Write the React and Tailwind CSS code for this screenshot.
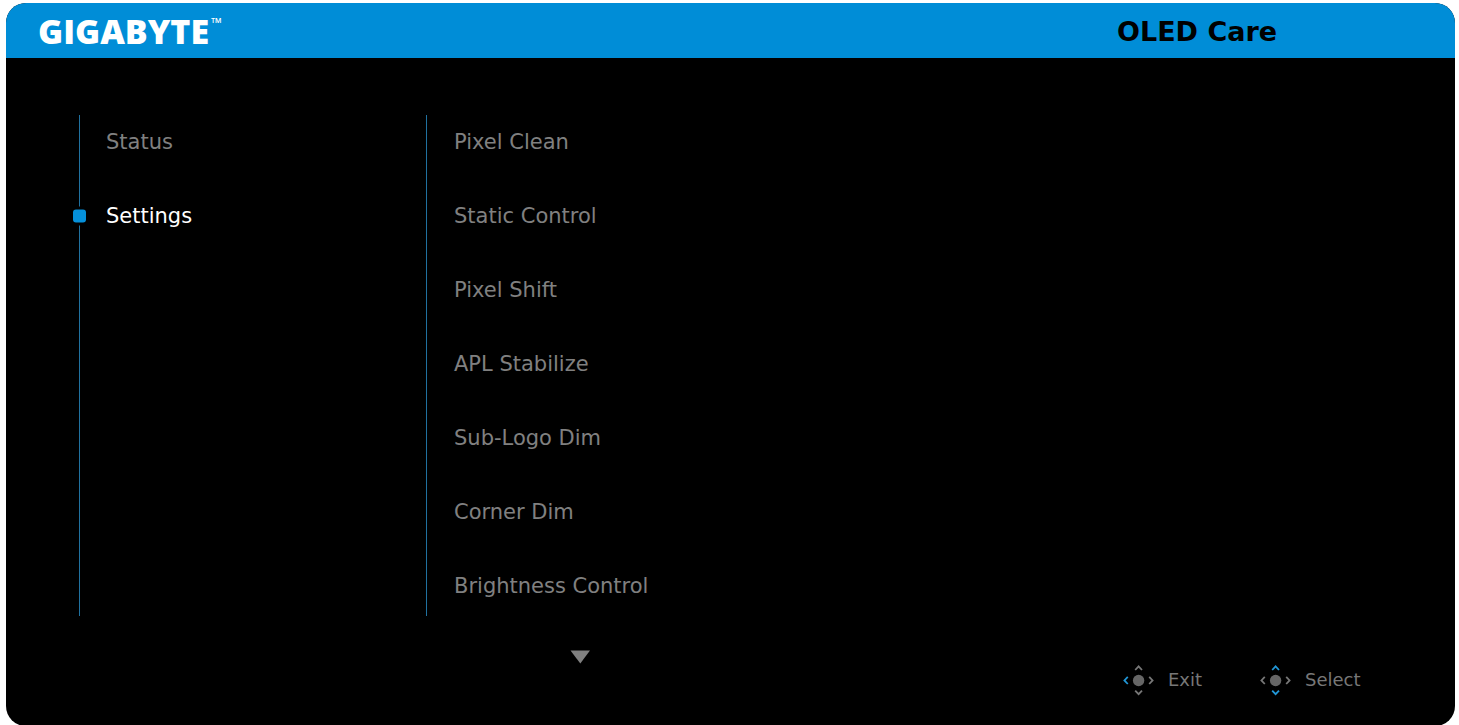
import React, { useState } from 'react';

const MENUS = ['Status', 'Settings'];

const SETTINGS = [
  'Pixel Clean',
  'Static Control',
  'Pixel Shift',
  'APL Stabilize',
  'Sub-Logo Dim',
  'Corner Dim',
  'Brightness Control',
];

const BLUE = '#2196d6';
const GRAY = '#777777';

// Joystick hint: the directions in `active` are highlighted
function JoystickIcon({ active }) {
  const stroke = (dir) => (active.includes(dir) ? BLUE : GRAY);

  return (
    <svg className="w-8 h-8 shrink-0" viewBox="0 0 32 32" fill="none" strokeWidth="1.8" aria-hidden="true">
      <circle cx="15.6" cy="16.5" r="5.7" fill="#666666" />
      <path d="M12.2 6 L15.6 2.4 L19 6" stroke={stroke('up')} />
      <path d="M12.2 26.6 L15.6 30.2 L19 26.6" stroke={stroke('down')} />
      <path d="M4.8 12.8 L1.4 16.4 L4.8 20" stroke={stroke('left')} />
      <path d="M26.2 12.8 L29.6 16.4 L26.2 20" stroke={stroke('right')} />
    </svg>
  );
}

export default function App() {
  const [menu, setMenu] = useState('Settings');

  return (
    <div className="min-h-screen bg-white pt-[3px] pl-[6px] pr-1 font-['DejaVu_Sans','Liberation_Sans',sans-serif]">
      <div className="flex flex-col bg-black rounded-[20px] overflow-hidden">
        <header className="h-[55px] bg-[#008dd7] flex items-center justify-between pl-8">
          <div className="flex items-start text-white">
            <span className="text-[34px] leading-8 font-extrabold font-['Open_Sans','Noto_Sans',sans-serif]">GIGABYTE</span>
            <span className="text-sm leading-4 pl-0.5 font-['Open_Sans','Noto_Sans',sans-serif]">™</span>
          </div>
          <h1 className="w-[338px] pt-0.5 text-[27px] leading-8 font-bold text-black whitespace-nowrap">OLED Care</h1>
        </header>

        <main className="flex pt-[57px] pl-[73px]">
          <nav className="w-[347px] shrink-0">
            <ul className="h-[501px] flex flex-col gap-5 border-l border-[#20719f]">
              {MENUS.map((name) => (
                <li key={name} className="relative">
                  {menu === name && (
                    <span className="absolute -left-[10px] top-1/2 -translate-y-1/2 w-[19px] h-[19px] rounded-sm bg-black p-[3px]">
                      <span className="block w-full h-full rounded-[3px] bg-[#0590da]" />
                    </span>
                  )}
                  <button
                    onClick={() => setMenu(name)}
                    className={`h-[54px] pl-[26px] pt-0.5 text-[21px] text-left cursor-pointer ${
                      menu === name ? 'text-white' : 'text-[#808080]'
                    }`}
                  >
                    {name}
                  </button>
                </li>
              ))}
            </ul>
          </nav>

          <section className="flex-1">
            <ul className="h-[501px] flex flex-col gap-5 border-l border-[#20719f]">
              {SETTINGS.map((name) => (
                <li key={name}>
                  <button className="h-[54px] pl-[27px] pt-0.5 text-[21px] text-left text-[#808080] whitespace-nowrap cursor-pointer">
                    {name}
                  </button>
                </li>
              ))}
            </ul>
            <button aria-label="More settings" className="block mt-[34px] ml-[144px] cursor-pointer">
              <svg className="block w-5 h-[14px]" viewBox="0 0 20 14" fill="#808080" aria-hidden="true">
                <path d="M0.5 0.5 H20 L10.3 13.5 Z" />
              </svg>
            </button>
          </section>
        </main>

        <footer className="flex self-end w-[332px] pb-[30px] text-lg text-[#777777]">
          <div className="flex items-center gap-[13px] w-[137px]">
            <JoystickIcon active={['left']} />
            <span>Exit</span>
          </div>
          <div className="flex items-center gap-[13px]">
            <JoystickIcon active={['up', 'down']} />
            <span>Select</span>
          </div>
        </footer>
      </div>
    </div>
  );
}
